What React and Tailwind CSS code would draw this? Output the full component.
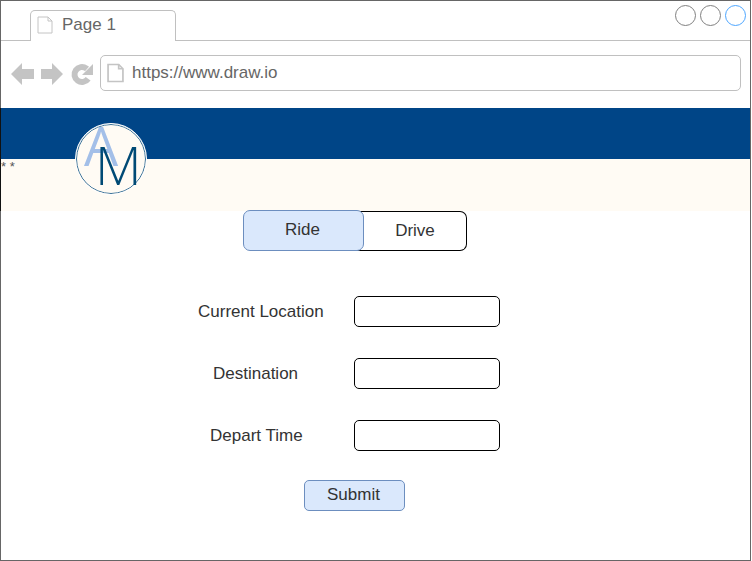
import React from "react";

const font = { fontFamily: '"Liberation Sans", Arial, sans-serif' };

function DocIcon({ w = 16, h = 18, sw = 1 }) {
  return (
    <svg width={w} height={h} viewBox="0 0 16 18" fill="none" stroke="#c4c4c4" strokeWidth={sw} className="shrink-0">
      <path d="M1 1H11L15 5V17H1Z" fill="#fff" />
      <path d="M11 1V5H15" />
    </svg>
  );
}

function Field({ label, labelClass }) {
  return (
    <div className="flex h-[31px] items-center">
      <div className="relative h-full w-[353px]">
        <span className={`absolute top-[6px] text-[17px] leading-5 text-[#333] ${labelClass}`}>{label}</span>
      </div>
      <div className="h-[31px] w-[146px] rounded-[5px] border border-black bg-white" />
    </div>
  );
}

export default function App() {
  return (
    <div className="h-[561px] w-[752px] bg-white" style={font}>
      <div className="relative flex h-[561px] w-[751px] flex-col border border-[#666] bg-white">
        {/* tab bar */}
        <div className="flex h-[40px] shrink-0 items-end justify-between border-b border-[#c0c0c0] pl-[29px] pr-[4px]">
          <div className="-mb-px flex h-[31px] w-[146px] items-center gap-[9px] rounded-t-[5px] border border-b-0 border-[#c0c0c0] bg-white pb-[2px] pl-[6px]">
            <DocIcon />
            <span className="text-[17px] leading-5 text-[#666]">Page 1</span>
          </div>
          <div className="mb-[4px] flex gap-[4px] self-start pt-[4px]">
            <div className="h-[21px] w-[21px] rounded-full border border-[#808080]" />
            <div className="h-[21px] w-[21px] rounded-full border border-[#808080]" />
            <div className="h-[21px] w-[21px] rounded-full border border-[#4da6ff]" />
          </div>
        </div>
        {/* address row */}
        <div className="flex h-[67px] shrink-0 items-start pl-[10px] pr-[9px] pt-[14px]">
          <svg width="82" height="26" viewBox="0 0 82 26" fill="#c4c4c4" className="mr-[7px] mt-[6px] shrink-0">
            <path d="M0 13L11 2V8H23V18H11V24Z" />
            <path d="M52 13L41 2V8H30V18H41V24Z" />
            <circle cx="71" cy="13.5" r="7.5" fill="none" stroke="#c4c4c4" strokeWidth="6" strokeDasharray="36 12" transform="rotate(35 71 13.5)" />
            <path d="M82 3V14H71L75 10L78 7Z" />
          </svg>
          <div className="flex h-[36px] flex-1 items-center gap-[8px] rounded-[5px] border border-[#c0c0c0] pl-[6px]">
            <DocIcon w={17} h={20} sw={1.6} />
            <span className="text-[17px] leading-5 text-[#666]">https://www.draw.io</span>
          </div>
        </div>
        {/* header band */}
        <div className="relative -ml-px h-[103px] shrink-0 border-l border-[#111]">
          <div className="h-[51px] bg-[#004587]" />
          <div className="h-[52px] bg-[#fffbf4]">
            <div className="pt-[2px] text-[13px] leading-3 text-[#555]">* *</div>
          </div>
          <div className="absolute left-[74px] top-[15px] h-[72px] w-[72px] overflow-hidden rounded-full border border-white bg-[#fffbf4]">
            <div className="h-full w-full rounded-full border border-[#2f6a94]" />
          </div>
          <span className="absolute left-[83px] top-[6px] text-[54px] font-normal leading-[62px] text-[#a3bfe8]" style={{ fontFamily: '"Open Sans", sans-serif' }}>A</span>
          <span className="absolute left-[94px] top-[24px] text-[54px] font-light leading-[64px] text-[#004a75]" style={{ fontFamily: '"Open Sans", sans-serif' }}>M</span>
        </div>
        {/* toggle */}
        <div className="-mt-px flex pl-[242px]">
          <div className="z-10 flex h-[41px] w-[121px] items-center justify-center rounded-[7px] border border-[#6c8ebf] bg-[#dae8fc] pb-[2px] pr-[2px] text-[17px] text-[#333]">
            Ride
          </div>
          <div className="-ml-[8px] mt-px flex h-[40px] w-[111px] items-center justify-center rounded-r-[7px] border border-l-0 border-black pl-[8px] text-[17px] text-[#333]">
            Drive
          </div>
        </div>
        {/* form */}
        <div className="mt-[45px] flex flex-col gap-[31px]">
          <Field label="Current Location" labelClass="left-[197px]" />
          <Field label="Destination" labelClass="left-[212px]" />
          <Field label="Depart Time" labelClass="left-[209px]" />
        </div>
        <div className="mt-[29px] flex pl-[303px]">
          <div className="flex h-[31px] w-[101px] items-center justify-center rounded-[5px] border border-[#6c8ebf] bg-[#dae8fc] pb-[2px] pr-[2px] text-[17px] text-[#333]">
            Submit
          </div>
        </div>
      </div>
    </div>
  );
}
